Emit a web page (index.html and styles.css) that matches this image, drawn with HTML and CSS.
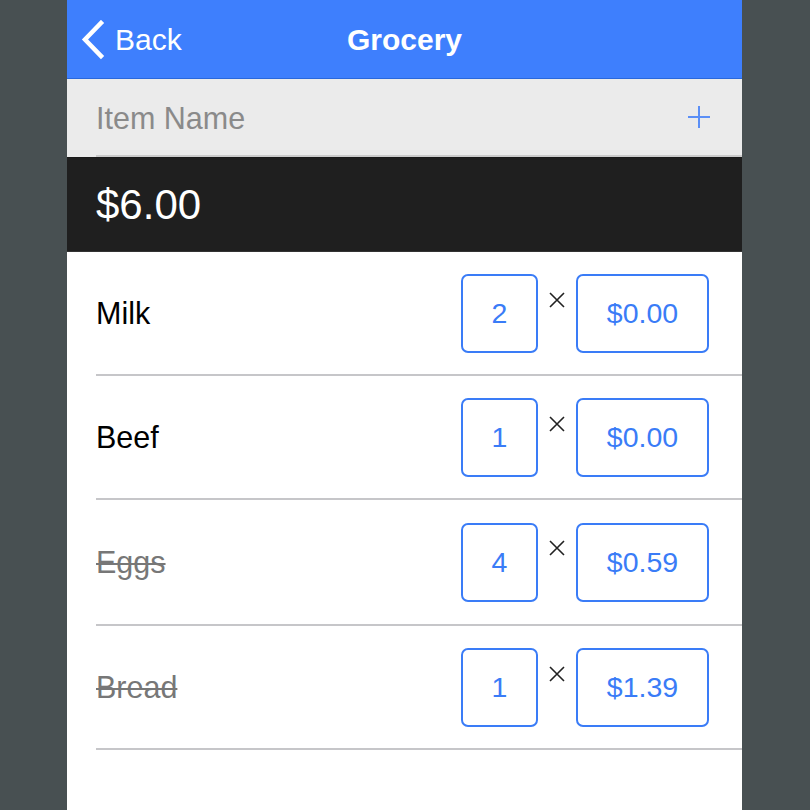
FILE: index.html
```html
<!DOCTYPE html>
<html>
<head>
<meta charset="utf-8">
<link rel="stylesheet" href="styles.css">
</head>
<body>
<div class="phone">
  <header class="nav">
    <div class="nav-left">
      <svg class="chev" width="26" height="40" viewBox="0 0 26 40"><polyline points="20,3 4,19.5 20,36" fill="none" stroke="#fff" stroke-width="4.5" stroke-linecap="square" stroke-linejoin="miter"/></svg>
      <span class="back">Back</span>
    </div>
    <div class="title">Grocery</div>
    <div class="nav-right"></div>
  </header>
  <div class="entry">
    <div class="entry-inner">
      <span class="placeholder">Item Name</span>
      <svg class="plus" width="24" height="24" viewBox="0 0 24 24"><path d="M12 1v22M1 12h22" stroke="#5b8ff6" stroke-width="2" fill="none"/></svg>
    </div>
  </div>
  <div class="total">$6.00</div>
  <div class="list">
    <div class="row"><div class="row-inner">
      <span class="name">Milk</span>
      <div class="qty">2</div><span class="times"><svg width="16" height="16" viewBox="0 0 16 16"><path d="M1 1L15 15M15 1L1 15" stroke="#222" stroke-width="1.6" fill="none"/></svg></span><div class="price">$0.00</div>
    </div></div>
    <div class="row"><div class="row-inner">
      <span class="name">Beef</span>
      <div class="qty">1</div><span class="times"><svg width="16" height="16" viewBox="0 0 16 16"><path d="M1 1L15 15M15 1L1 15" stroke="#222" stroke-width="1.6" fill="none"/></svg></span><div class="price">$0.00</div>
    </div></div>
    <div class="row"><div class="row-inner tall">
      <span class="name done">Eggs</span>
      <div class="qty">4</div><span class="times"><svg width="16" height="16" viewBox="0 0 16 16"><path d="M1 1L15 15M15 1L1 15" stroke="#222" stroke-width="1.6" fill="none"/></svg></span><div class="price">$0.59</div>
    </div></div>
    <div class="row"><div class="row-inner">
      <span class="name done">Bread</span>
      <div class="qty">1</div><span class="times"><svg width="16" height="16" viewBox="0 0 16 16"><path d="M1 1L15 15M15 1L1 15" stroke="#222" stroke-width="1.6" fill="none"/></svg></span><div class="price">$1.39</div>
    </div></div>
  </div>
</div>
</body>
</html>
```
FILE: styles.css
```css
html, body {
  margin: 0;
  padding: 0;
  background: #485052;
  font-family: "Liberation Sans", Arial, sans-serif;
}
.phone {
  width: 675px;
  height: 810px;
  margin-left: 67px;
  background: #fff;
  overflow: hidden;
}
.nav {
  height: 78px;
  background: #3e7ffd;
  border-bottom: 1px solid #2a68db;
  display: grid;
  grid-template-columns: 1fr auto 1fr;
  align-items: center;
  color: #fff;
}
.nav-left {
  display: flex;
  align-items: center;
  padding-left: 14px;
}
.chev {
  display: block;
  margin-top: 1px;
}
.back {
  font-size: 30px;
  margin-left: 8px;
  margin-top: 2px;
}
.title {
  font-size: 30px;
  font-weight: bold;
  margin-top: 2px;
}
.entry {
  background: #ebebeb;
  padding-left: 29px;
  border-bottom: 1px solid #1a1a1a;
}
.entry-inner {
  height: 76px;
  border-bottom: 2px solid #cbcbcb;
  display: flex;
  align-items: center;
  justify-content: space-between;
  padding-right: 31px;
}
.placeholder {
  font-size: 30.5px;
  color: #8a8a8a;
  margin-top: 2px;
}
.plus {
  display: block;
}
.total {
  height: 93px;
  background: #1f1f1f;
  border-bottom: 1px solid #333;
  color: #fff;
  font-size: 42px;
  padding-left: 29px;
  display: flex;
  align-items: center;
}
.row {
  padding-left: 29px;
}
.row-inner {
  height: 122px;
  border-bottom: 2px solid #c6c6c9;
  display: flex;
  align-items: center;
  padding-right: 33px;
}
.row-inner.tall {
  height: 124px;
}
.name {
  flex: 1;
  font-size: 30.5px;
  color: #000;
  margin-top: 1px;
}
.name.done {
  color: #777;
  text-decoration: line-through;
  text-decoration-color: #777;
  text-decoration-thickness: 2px;
}
.qty, .price {
  box-sizing: border-box;
  height: 79px;
  border: 2px solid #3a7cf7;
  border-radius: 7px;
  color: #3a7cf7;
  font-size: 28.5px;
  display: flex;
  align-items: center;
  justify-content: center;
}
.qty {
  width: 77px;
}
.price {
  width: 133px;
}
.times {
  align-self: flex-start;
  margin-top: 40px;
  width: 38px;
  display: flex;
  justify-content: center;
}
.times svg {
  display: block;
}
```
